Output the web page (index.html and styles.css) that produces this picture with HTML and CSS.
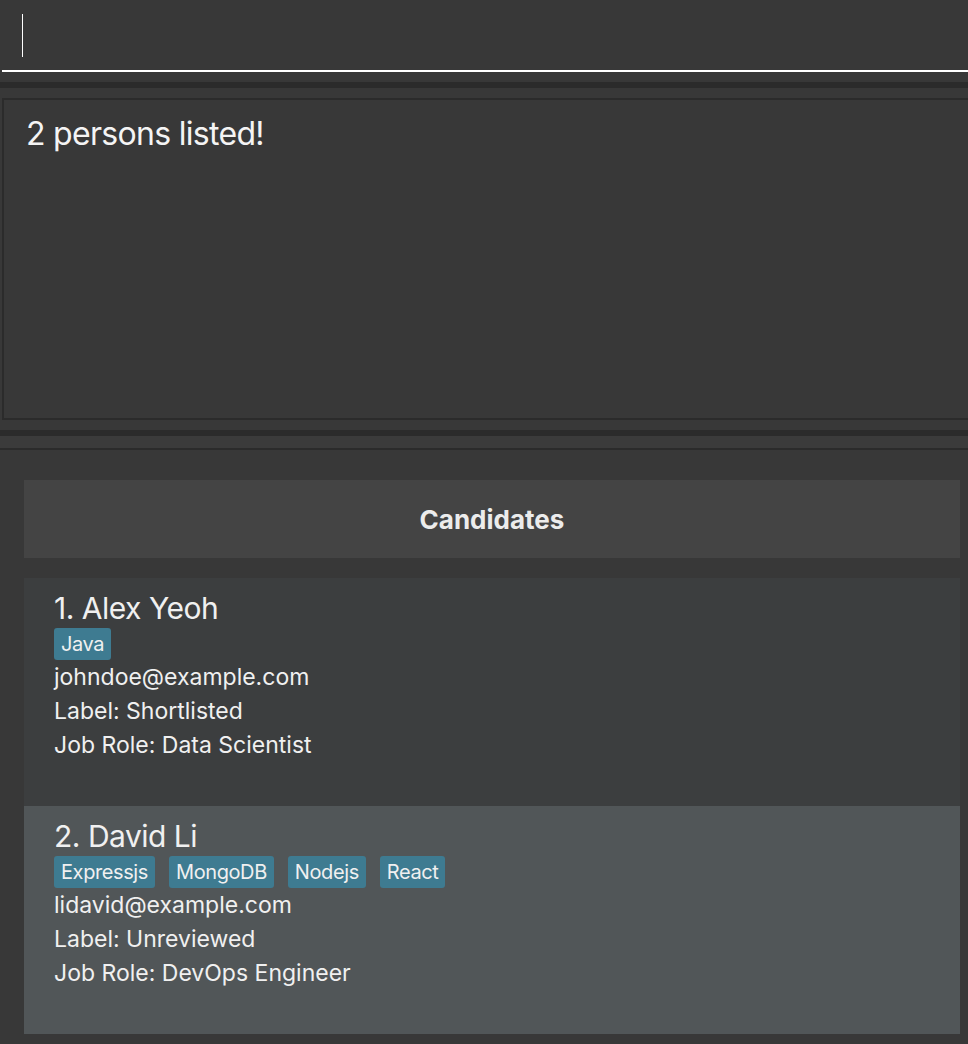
FILE: index.html
```html
<!DOCTYPE html>
<html lang="en">
<head>
<meta charset="utf-8">
<title>Candidates</title>
<link rel="stylesheet" href="styles.css">
</head>
<body>
<div class="app">
  <div class="command">
    <div class="cursor"></div>
  </div>
  <div class="command-line"></div>
  <div class="splitter"></div>
  <div class="result">
    <p class="result-text">2 persons listed!</p>
  </div>
  <div class="splitter splitter-bottom"></div>
  <div class="divider-strip"></div>
  <div class="list-panel">
    <div class="list-header">Candidates</div>
    <div class="card card-even">
      <div class="card-name">1. Alex Yeoh</div>
      <div class="tags">
        <span class="tag">Java</span>
      </div>
      <div class="card-line">johndoe@example.com</div>
      <div class="card-line">Label: Shortlisted</div>
      <div class="card-line">Job Role: Data Scientist</div>
    </div>
    <div class="card card-odd">
      <div class="card-name">2. David Li</div>
      <div class="tags">
        <span class="tag">Expressjs</span>
        <span class="tag">MongoDB</span>
        <span class="tag">Nodejs</span>
        <span class="tag">React</span>
      </div>
      <div class="card-line">lidavid@example.com</div>
      <div class="card-line">Label: Unreviewed</div>
      <div class="card-line">Job Role: DevOps Engineer</div>
    </div>
  </div>
</div>
</body>
</html>
```

FILE: styles.css
```css
html, body {
  margin: 0;
  padding: 0;
  background: #383838;
}

body {
  font-family: Inter, "Noto Sans", "Liberation Sans", sans-serif;
  color: #f0f0f0;
  height: 1044px;
  overflow: hidden;
}

.app {
  display: flex;
  flex-direction: column;
}

.command {
  height: 70px;
  box-sizing: border-box;
  padding: 14px 0 0 22px;
}

.cursor {
  width: 1px;
  height: 43px;
  background: #ffffff;
}

.command-line {
  height: 2px;
  margin-left: 2px;
  background: #ffffff;
}

.splitter {
  height: 6px;
  margin: 10px 0;
  background: #2b2b2b;
}

.splitter-bottom {
  margin-bottom: 0;
}

.divider-strip {
  height: 12px;
  background: #3b3b3b;
  border-bottom: 2px solid #2b2b2b;
}

.result {
  height: 322px;
  box-sizing: border-box;
  margin-left: 2px;
  border: 2px solid #2b2b2b;
  border-right: none;
  padding: 14px 0 0 22px;
}

.result-text {
  margin: 0;
  font-size: 32px;
  line-height: 40px;
  letter-spacing: -0.7px;
  color: #f4f4f4;
}

.list-panel {
  padding: 30px 8px 0 24px;
  display: flex;
  flex-direction: column;
}

.list-header {
  height: 78px;
  background: #444444;
  display: flex;
  align-items: center;
  justify-content: center;
  font-size: 26px;
  font-weight: 700;
  color: #ececec;
  margin-bottom: 20px;
}

.card {
  height: 228px;
  box-sizing: border-box;
  padding: 12px 0 0 30px;
}

.card-even {
  background: #3c3e3f;
}

.card-odd {
  background: #515658;
}

.card-name {
  font-size: 30px;
  line-height: 36px;
  letter-spacing: -0.5px;
  color: #f0f0f0;
}

.tags {
  display: flex;
  gap: 14px;
  margin-top: 2px;
}

.tag {
  background: #3e7b91;
  color: #f0f0f0;
  font-size: 20px;
  line-height: 32px;
  height: 32px;
  padding: 0 7px;
  letter-spacing: -0.4px;
  border-radius: 3px;
}

.card-line {
  font-size: 23px;
  line-height: 34px;
  color: #f0f0f0;
}
```
